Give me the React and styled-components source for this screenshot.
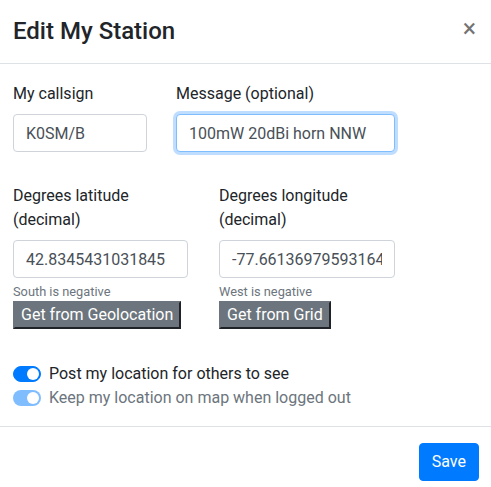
import React from "react";
import styled, { createGlobalStyle } from "styled-components";

const Global = createGlobalStyle`
  html, body {
    margin: 0;
    padding: 0;
    background: #fff;
  }
  body {
    font-family: Roboto, "Liberation Sans", sans-serif;
    font-size: 16px;
    line-height: 1.5;
    color: #212529;
  }
  * { box-sizing: border-box; }
`;

const Modal = styled.div`
  width: 491px;
  background: #fff;
`;

const Header = styled.div`
  display: flex;
  align-items: flex-start;
  justify-content: space-between;
  height: 64px;
  padding: 15px 13px 0 13px;
  border-bottom: 1px solid #dee2e6;
`;

const Title = styled.h5`
  margin: 0;
  font-size: 24px;
  font-weight: 500;
  line-height: 32px;
`;

const Close = styled.button`
  border: 0;
  background: transparent;
  padding: 0;
  margin: 1px 2px 0 0;
  font-family: inherit;
  font-size: 25px;
  font-weight: 400;
  line-height: 1;
  color: #000;
  opacity: 0.55;
  text-shadow: 0 1px 0 #fff;
`;

const Body = styled.div`
  padding: 18px 13px 16px 13px;
`;

const Row = styled.div`
  display: grid;
  grid-template-columns: ${(p) => p.$cols};
  column-gap: ${(p) => p.$gap}px;
  margin-bottom: ${(p) => p.$mb || 0}px;
`;

const Group = styled.div`
  display: flex;
  flex-direction: column;
  align-items: flex-start;
  min-width: 0;
`;

const Label = styled.label`
  display: block;
  margin-bottom: 8px;
`;

const Input = styled.input`
  display: block;
  width: 100%;
  height: 38px;
  padding: 6px 12px;
  font-family: inherit;
  font-size: 16px;
  line-height: 1.5;
  color: #495057;
  background: #fff;
  border: 1px solid ${(p) => (p.$focus ? "#80bdff" : "#ced4da")};
  border-radius: 4px;
  outline: 0;
  box-shadow: ${(p) => (p.$focus ? "0 0 0 3px rgba(0,123,255,.25)" : "none")};
`;

const Help = styled.small`
  display: block;
  margin-top: 4px;
  font-size: 12.8px;
  line-height: 1.5;
  color: #6c757d;
`;

const GrayButton = styled.button`
  height: 28px;
  padding: 1px 6px;
  font-family: inherit;
  font-size: 16px;
  line-height: 22px;
  color: #fff;
  background: #6c757d;
  border: 2px solid;
  border-color: #6c757d #1f2226 #1f2226 #6c757d;
  border-radius: 0;
`;

const Switches = styled.div`
  margin-top: 33px;
`;

const SwitchRow = styled.div`
  display: flex;
  align-items: flex-start;
  gap: 8px;
  min-height: 24px;
  color: ${(p) => (p.$disabled ? "#6c757d" : "#212529")};
`;

const Track = styled.span`
  position: relative;
  flex: none;
  width: 28px;
  height: 16px;
  margin-top: 4px;
  border-radius: 8px;
  background: ${(p) => (p.$disabled ? "rgba(0,123,255,.5)" : "#007bff")};
  border: 1px solid ${(p) => (p.$disabled ? "rgba(0,123,255,0)" : "#007bff")};
  &::after {
    content: "";
    position: absolute;
    top: 1px;
    right: 1px;
    width: 12px;
    height: 12px;
    border-radius: 50%;
    background: #fff;
  }
`;

const Footer = styled.div`
  display: flex;
  justify-content: flex-end;
  padding: 16px 12px 16px 13px;
  border-top: 1px solid #dee2e6;
`;

const PrimaryButton = styled.button`
  padding: 6px 12px;
  font-family: inherit;
  font-size: 16px;
  line-height: 1.5;
  color: #fff;
  background: #007bff;
  border: 1px solid #007bff;
  border-radius: 4px;
`;

const Switch = ({ disabled, children }) => (
  <SwitchRow $disabled={disabled}>
    <Track $disabled={disabled} />
    <span>{children}</span>
  </SwitchRow>
);

export default function App() {
  return (
    <Modal>
      <Global />
      <Header>
        <Title>Edit My Station</Title>
        <Close aria-label="Close">×</Close>
      </Header>
      <Body>
        <Row $cols="134px 219px" $gap={29} $mb={32}>
          <Group>
            <Label>My callsign</Label>
            <Input defaultValue="K0SM/B" />
          </Group>
          <Group>
            <Label>Message (optional)</Label>
            <Input $focus defaultValue="100mW 20dBi horn NNW" />
          </Group>
        </Row>
        <Row $cols="175px 176px" $gap={31}>
          <Group>
            <Label>Degrees latitude (decimal)</Label>
            <Input defaultValue="42.8345431031845" />
            <Help>South is negative</Help>
            <GrayButton>Get from Geolocation</GrayButton>
          </Group>
          <Group>
            <Label>Degrees longitude (decimal)</Label>
            <Input defaultValue="-77.6613697959316405" />
            <Help>West is negative</Help>
            <GrayButton>Get from Grid</GrayButton>
          </Group>
        </Row>
        <Switches>
          <Switch>Post my location for others to see</Switch>
          <Switch disabled>Keep my location on map when logged out</Switch>
        </Switches>
      </Body>
      <Footer>
        <PrimaryButton>Save</PrimaryButton>
      </Footer>
    </Modal>
  );
}
